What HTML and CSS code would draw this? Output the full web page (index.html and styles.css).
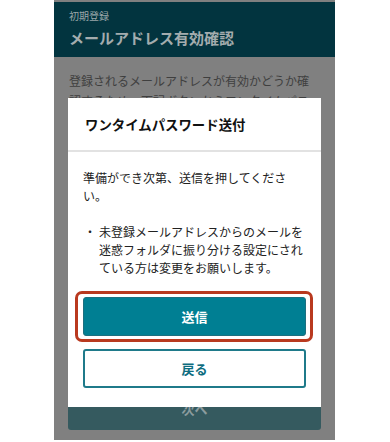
FILE: index.html
```html
<!DOCTYPE html>
<html lang="ja">
<head>
<meta charset="utf-8">
<link rel="stylesheet" href="styles.css">
</head>
<body>
<div class="phone">
  <div class="header">
    <div class="header-sub">初期登録</div>
    <div class="header-title">メールアドレス有効確認</div>
  </div>
  <div class="content">
    <p class="content-text">登録されるメールアドレスが有効かどうか確認するため、下記ボタンからワンタイムパスワードを送信してください。</p>
  </div>
  <div class="next-btn">次へ</div>

  <div class="modal">
    <div class="modal-head">ワンタイムパスワード送付</div>
    <div class="modal-body">
      <p class="modal-text">準備ができ次第、送信を押してください。</p>
      <div class="note">
        <span class="note-dot">・</span>
        <span class="note-text">未登録メールアドレスからのメールを迷惑フォルダに振り分ける設定にされている方は変更をお願いします。</span>
      </div>
      <div class="actions">
        <div class="send-wrap">
          <button class="btn btn-send">送信</button>
        </div>
        <button class="btn btn-back">戻る</button>
      </div>
    </div>
  </div>
</div>
</body>
</html>
```

FILE: styles.css
```css
* { box-sizing: border-box; }
html, body { margin: 0; padding: 0; background: #ffffff; }
body {
  font-family: "Noto Sans CJK JP", "Noto Sans", sans-serif;
  width: 390px;
  height: 442px;
  overflow: hidden;
}
.phone {
  position: relative;
  margin-left: 54px;
  width: 281px;
  height: 440px;
  background: #808080;
  padding-top: 2px;
  overflow: hidden;
}
.header {
  height: 55px;
  background: #02343f;
  padding: 8px 15px 0 15px;
}
.header-sub {
  font-size: 10px;
  line-height: 12px;
  color: #9aa6a9;
}
.header-title {
  margin-top: 7px;
  font-size: 15px;
  line-height: 18px;
  font-weight: 700;
  color: #a3acae;
}
.content {
  padding: 14px 15px 0 15px;
}
.content-text {
  margin: 0;
  font-size: 12px;
  line-height: 20px;
  color: #3f3f3f;
}
.next-btn {
  position: absolute;
  left: 14px;
  top: 386px;
  width: 253px;
  height: 44px;
  border-radius: 3px;
  background: #355a5f;
  color: #8c9c9e;
  font-size: 13px;
  font-weight: 700;
  display: flex;
  align-items: center;
  justify-content: center;
}
.modal {
  position: absolute;
  left: 14px;
  top: 98px;
  width: 253px;
  height: 309px;
  background: #ffffff;
}
.modal-head {
  height: 54px;
  padding-left: 17px;
  display: flex;
  align-items: center;
  font-size: 13.4px;
  font-weight: 700;
  color: #111111;
  border-bottom: 2px solid #e2e2e2;
}
.modal-body {
  padding: 17px 15px 0 15px;
}
.modal-text {
  margin: 0;
  font-size: 12px;
  line-height: 18px;
  color: #222222;
}
.note {
  margin-top: 18px;
  display: flex;
  font-size: 12px;
  line-height: 18px;
  color: #222222;
}
.note-dot {
  width: 16px;
  flex: none;
  padding-left: 1px;
}
.note-text {
  flex: 1;
  padding-right: 3px;
}
.actions {
  margin-top: 20px;
  display: flex;
  flex-direction: column;
  gap: 13px;
}
.send-wrap {
  position: relative;
}
.send-wrap::before {
  content: "";
  position: absolute;
  left: -8px;
  right: -7px;
  top: -6px;
  bottom: -6px;
  border: 3px solid #b9391f;
  border-radius: 7px;
  pointer-events: none;
}
.btn {
  display: block;
  width: 100%;
  height: 39px;
  border-radius: 3px;
  font-family: inherit;
  font-size: 13px;
  font-weight: 700;
  padding: 0;
}
.btn-send {
  background: #007f93;
  border: 1px solid #1d6f7f;
  color: #ffffff;
}
.btn-back {
  background: #ffffff;
  border: 2px solid #1f7a8a;
  color: #0e6d7f;
}
```
